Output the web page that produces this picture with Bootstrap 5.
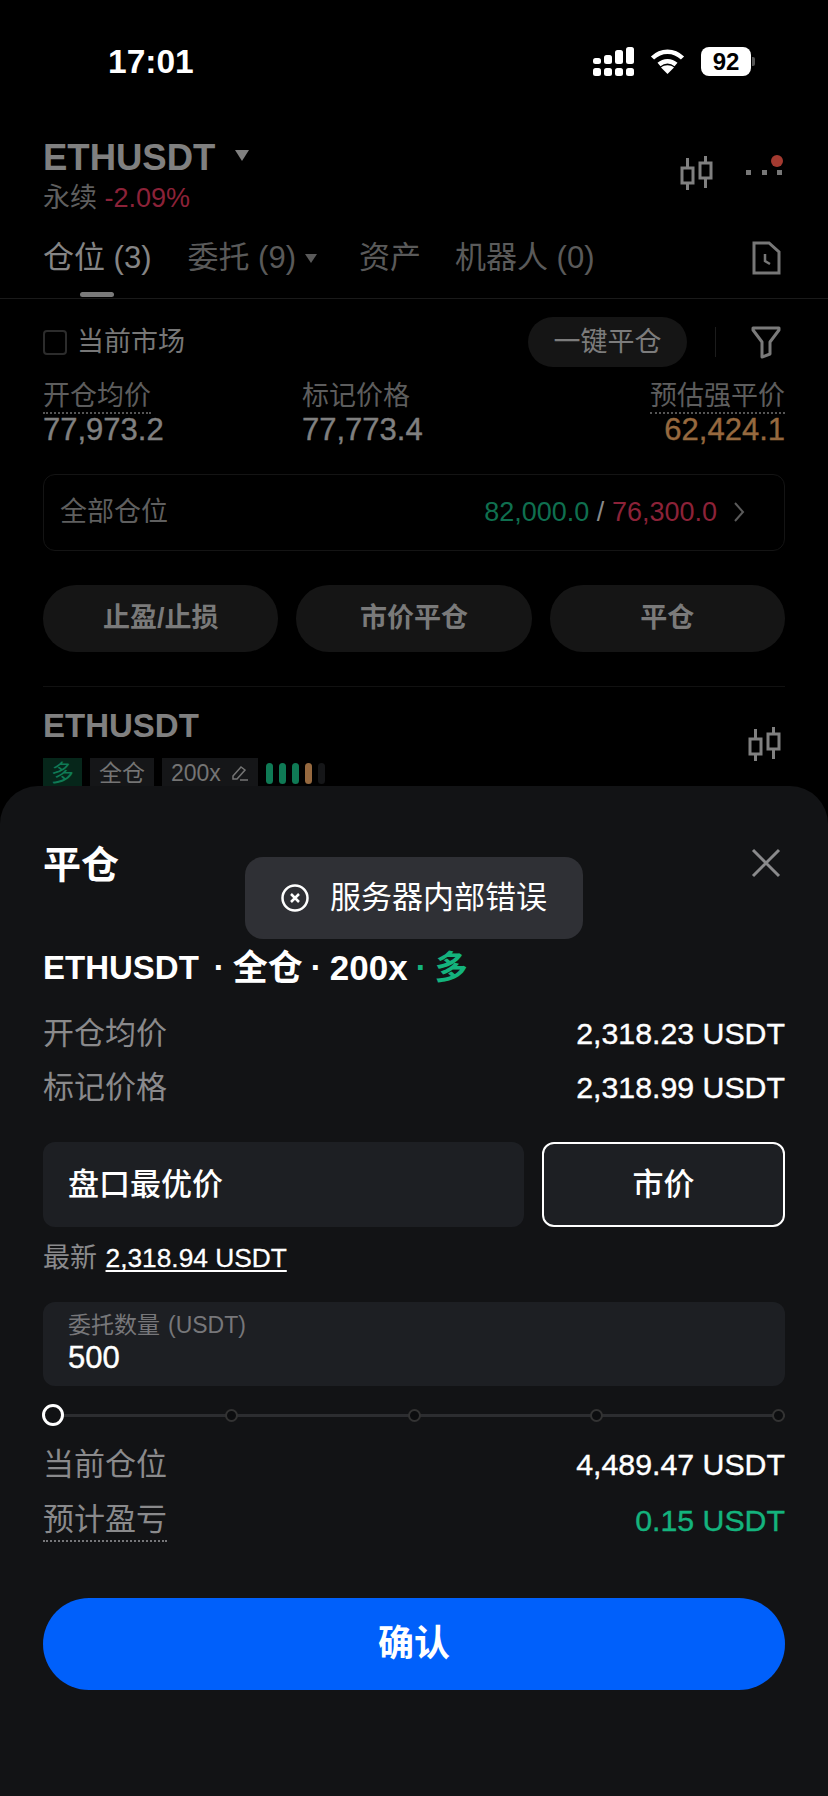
<!DOCTYPE html>
<html lang="zh-CN">
<head>
  <meta charset="UTF-8">
  <meta name="viewport" content="width=device-width, initial-scale=1.0">
  <title>平仓</title>
  <link rel="stylesheet" href="https://cdn.jsdelivr.net/npm/bootstrap@5.3.5/dist/css/bootstrap.min.css">
  <script src="https://cdn.jsdelivr.net/npm/bootstrap@5.3.5/dist/js/bootstrap.bundle.min.js"></script>
  <style>
    body { background: #000; font-family: "Liberation Sans", "Noto Sans CJK SC", sans-serif; }
    .screen { position: relative; width: 828px; height: 1796px; overflow: hidden; background: #000; color: #7d7d7d; }

    .status-bar { height: 88px; padding: 42px 73px 0 108px; color: #fff; }
    .status-time { font-size: 33.500px; line-height: 40px; font-weight: 700; }
    .status-icons { padding-top: 5px; }
    .batt { width: 50px; height: 29px; border-radius: 8px; background: #fff; color: #000; font-size: 24px; font-weight: 700; line-height: 29px; text-align: center; }
    .batt-nub { width: 3px; height: 9px; margin-left: 1px; border-radius: 0 2px 2px 0; background: #555; }

    .head-block { padding: 48px 43px 0; height: 150px; }
    .sym-big { font-size: 36.500px; line-height: 44px; font-weight: 700; color: #808080; }
    .sub-line { font-size: 27px; line-height: 34px; color: #5f5f5f; margin-top: 1px; }
    .down-dim { color: #8c2238; }
    .tri { width: 0; height: 0; border-left: 7px solid transparent; border-right: 7px solid transparent; border-top: 11px solid #808080; }
    .tri-big { margin-left: 20px; margin-top: -6px; }
    .tri-sm { border-left-width: 6px; border-right-width: 6px; border-top-width: 9px; border-top-color: #5a5a5a; margin-left: 9px; }
    .head-tools { padding-top: 19px; gap: 32px; }

    .tab-bar { height: 61px; padding: 0 43px; border-bottom: 1px solid #1a1a1a; position: relative; font-size: 31px; line-height: 36px; color: #5a5a5a; }
    .tab-on { color: #858585; }
    .tab-mark { position: absolute; left: 80px; bottom: 1px; width: 34px; height: 5px; border-radius: 3px; background: #7a7a7a; }
    .tab-item { padding-top: 2px; }
    .tab-gap-a { margin-left: 36px; }
    .tab-gap-b { margin-left: 42px; }
    .tab-gap-c { margin-left: 34px; }
    .tab-file { margin-top: 3px; }

    .pos-wrap { padding: 0 43px; }
    .filter-row { height: 50px; margin-top: 18px; font-size: 27px; color: #777; }
    .check-box { width: 24px; height: 25px; border: 2px solid #2c2c2c; border-radius: 4px; margin-right: 10px; }
    .pill-dim { width: 159px; height: 50px; border-radius: 25px; background: #151515; color: #7c7c7c; font-size: 27px; line-height: 50px; text-align: center; }
    .vsep { width: 1px; height: 30px; background: #1c1c1c; margin: 0 35px 0 28px; }

    .stat-row { font-size: 27px; margin-top: 9px; }
    .stat-first { width: 259px; }
    .stat-lbl { color: #5d5d5d; line-height: 32px; display: inline-block; }
    .dot-under { border-bottom: 2px dotted #555; }
    .stat-val { font-size: 31px; line-height: 32px; margin-top: -3px; color: #808080; -webkit-text-stroke: .4px; }
    .warm-dim { color: #96693f; }

    .all-box { height: 77px; margin-top: 28px; border: 1px solid #141414; border-radius: 12px; padding: 0 39px 0 16px; font-size: 27px; color: #5f5f5f; }
    .up-dim { color: #0f6f4f; }
    .slash-dim { color: #8a8a8a; }
    .all-chev { margin-left: 16px; }
    .act-row { margin-top: 34px; gap: 18px; }
    .act-btn { height: 67px; border-radius: 33px; background: #151515; color: #7a7a7a; font-size: 27px; font-weight: 700; line-height: 67px; text-align: center; flex: 1 1 0; }
    .row-rule { height: 1px; background: #111; margin-top: 34px; }
    .sym-mid { font-size: 33px; line-height: 38px; font-weight: 700; color: #808080; margin-top: 20px; }
    .tag-row { margin-top: 13px; }
    .tag-dim { height: 31px; line-height: 31px; background: #151618; color: #747474; font-size: 23px; padding: 0 9px; }
    .tag-long { background: #06261a; color: #0f7a55; padding: 0 8px; }
    .tag-lev { gap: 10px; }
    .pip-set { gap: 6px; padding-top: 5px; }
    .pip { width: 7px; height: 21px; border-radius: 4px; background: #0f7a55; }
    .pip-warm { background: #96693f; }
    .pip-off { background: #151618; }
    .sym-chart { margin-top: 39px; }

    .sheet { position: absolute; left: 0; right: 0; bottom: 0; height: 1010px; background: #121315; border-radius: 38px 38px 0 0; padding: 0 43px; color: #fff; }
    .sheet-top { height: 162px; padding-top: 57px; }
    .sheet-title { font-size: 38px; line-height: 44px; font-weight: 700; }
    .sheet-close { margin-top: 5px; }
    .meta-line { font-size: 33px; line-height: 40px; font-weight: 700; height: 40px; gap: 8px; }
    .meta-first { margin-left: 7px; }
    .meta-cjk { font-size: 35px; }
    .meta-lev { font-size: 35px; }
    .long-green { color: #14b37d; }
    .info-block { margin-top: 19px; }
    .info-row { height: 54px; font-size: 30.300px; -webkit-text-stroke: .4px; }
    .info-row-b { height: 56px; }
    .info-lbl { font-size: 31px; color: #8a8a8c; -webkit-text-stroke: 0; }
    .info-dots { border-bottom: 2px dotted #77777a; line-height: 40px; display: inline-block; }

    .pick-row { margin-top: 27px; }
    .pick-box { height: 85px; border-radius: 12px; background: #1d1f23; font-size: 31px; font-weight: 500; line-height: 85px; }
    .pick-main { width: 481px; padding-left: 25px; }
    .pick-side { width: 243px; border: 2px solid #fff; line-height: 81px; text-align: center; }
    .latest-line { font-size: 27px; line-height: 32px; margin-top: 15px; color: #8a8a8c; }
    .latest-line u { color: #fff; font-size: 26.300px; text-underline-offset: 3px; margin-left: 1px; -webkit-text-stroke: .3px; }

    .qty-box { height: 84px; margin-top: 28px; background: #1d1f23; border-radius: 12px; padding: 9px 25px 0; }
    .qty-lbl { font-size: 23px; line-height: 28px; color: #77777a; }
    .qty-unit { margin-left: 8px; }
    .qty-val { font-size: 31px; line-height: 38px; font-weight: 500; -webkit-text-stroke: .4px; }

    .slide-wrap { position: relative; height: 22px; margin-top: 18px; }
    .slide-line { position: absolute; left: 0; right: 0; top: 10px; height: 3px; background: #2c2d30; }
    .slide-stops { position: relative; height: 22px; }
    .slide-stop { width: 13px; height: 13px; border-radius: 50%; background: #0c0d0f; border: 2px solid #333; }
    .slide-thumb { position: absolute; left: -1px; top: 0; width: 22px; height: 22px; border-radius: 50%; background: #111214; border: 3px solid #fff; }
    .after-slide { margin-top: 11px; }

    .confirm-btn { display: block; width: 100%; height: 92px; margin-top: 49px; border: 0; border-radius: 46px; background: #0060fb; color: #fff; font-size: 36px; font-weight: 700; }

    .toast-msg { position: absolute; left: 245px; top: 857px; width: 338px; height: 82px; background: #2f3035; border-radius: 18px; color: #fff; font-size: 31px; padding-left: 36px; gap: 21px; }
  </style>
</head>
<body>
  <div class="screen">

    <div class="status-bar d-flex justify-content-between">
      <div class="status-time">17:01</div>
      <div class="status-icons d-flex align-items-start gap-3">
        <svg width="41" height="29" viewBox="0 0 41 29" fill="#fff">
          <rect x="0" y="11" width="8" height="6" rx="2.500"/><rect x="11" y="8" width="8" height="9" rx="2.500"/><rect x="22" y="3" width="8" height="14" rx="2.500"/><rect x="33" y="0" width="8" height="17" rx="2.500"/>
          <rect x="0" y="21" width="8" height="8" rx="2.500"/><rect x="11" y="21" width="8" height="8" rx="2.500"/><rect x="22" y="21" width="8" height="8" rx="2.500"/><rect x="33" y="21" width="8" height="8" rx="2.500"/>
        </svg>
        <svg width="35" height="28" viewBox="0 0 35 28" fill="none" stroke="#fff" stroke-width="4.500">
          <path d="M2.500 11C11 2.500 24 2.500 32.500 11"/><path d="M9 17.500C14 13 21 13 26 17.500"/><path d="M17.500 27l-6.500-6.500c3.500-3 9.500-3 13 0z" fill="#fff" stroke="none"/>
        </svg>
        <div class="d-flex align-items-center">
          <div class="batt">92</div>
          <div class="batt-nub"></div>
        </div>
      </div>
    </div>

    <div class="head-block d-flex justify-content-between">
      <div>
        <div class="d-flex align-items-center">
          <span class="sym-big">ETHUSDT</span><span class="tri tri-big"></span>
        </div>
        <div class="sub-line">永续 <span class="down-dim">-2.09%</span></div>
      </div>
      <div class="head-tools d-flex align-items-start">
        <svg width="33" height="36" viewBox="0 0 33 36" fill="none" stroke="#808080" stroke-width="3">
          <rect x="2" y="13" width="11" height="15"/><path d="M7.500 3v10M7.500 28v7"/><rect x="20" y="8" width="11" height="15"/><path d="M25.500 1v7M25.500 23v10"/>
        </svg>
        <svg width="40" height="24" viewBox="0 0 40 24" fill="#777">
          <rect x="1" y="15" width="5" height="5"/><rect x="17" y="15" width="5" height="5"/><rect x="32" y="15" width="5" height="5"/>
          <circle cx="32" cy="6" r="6" fill="#a33a30"/>
        </svg>
      </div>
    </div>

    <div class="tab-bar d-flex align-items-start">
      <div class="tab-item tab-on">仓位 (3)</div>
      <div class="tab-item tab-gap-a d-flex align-items-center">委托 (9)<span class="tri tri-sm"></span></div>
      <div class="tab-item tab-gap-b">资产</div>
      <div class="tab-item tab-gap-c">机器人 (0)</div>
      <svg class="tab-file ms-auto me-1" width="29" height="34" viewBox="0 0 29 34" fill="none" stroke="#777" stroke-width="3">
        <path d="M2 2h15l10 9v21H2z"/><path d="M13 13v7l5 3" stroke-width="2.500"/>
      </svg>
      <div class="tab-mark"></div>
    </div>

    <div class="pos-wrap">
      <div class="filter-row d-flex align-items-center">
        <div class="check-box"></div>
        <div>当前市场</div>
        <div class="pill-dim ms-auto">一键平仓</div>
        <div class="vsep"></div>
        <svg class="me-1" width="30" height="33" viewBox="0 0 30 33" fill="none" stroke="#7a7a7a" stroke-width="3" stroke-linejoin="round">
          <path d="M2 2h26v2L19 16v12l-8 3V16L2 4z"/>
        </svg>
      </div>

      <div class="stat-row d-flex">
        <div class="stat-first">
          <div class="stat-lbl dot-under">开仓均价</div>
          <div class="stat-val">77,973.2</div>
        </div>
        <div>
          <div class="stat-lbl">标记价格</div>
          <div class="stat-val">77,773.4</div>
        </div>
        <div class="ms-auto text-end">
          <div class="stat-lbl dot-under">预估强平价</div>
          <div class="stat-val warm-dim">62,424.1</div>
        </div>
      </div>

      <div class="all-box d-flex align-items-center">
        <div>全部仓位</div>
        <div class="ms-auto"><span class="up-dim">82,000.0</span> <span class="slash-dim">/</span> <span class="down-dim">76,300.0</span></div>
        <svg class="all-chev" width="12" height="24" viewBox="0 0 12 24" fill="none" stroke="#5a5a5a" stroke-width="2"><path d="M2 3l8 9-8 9"/></svg>
      </div>

      <div class="act-row d-flex">
        <div class="act-btn">止盈/止损</div>
        <div class="act-btn">市价平仓</div>
        <div class="act-btn">平仓</div>
      </div>

      <div class="row-rule"></div>

      <div class="d-flex justify-content-between">
        <div>
          <div class="sym-mid">ETHUSDT</div>
          <div class="tag-row d-flex align-items-start">
            <div class="tag-dim tag-long">多</div>
            <div class="tag-dim ms-2">全仓</div>
            <div class="tag-dim tag-lev ms-2 d-flex align-items-center">200x
              <svg width="18" height="16" viewBox="0 0 18 16" fill="none" stroke="#747474" stroke-width="1.500"><path d="M2 11L10 2l4 3-8 9H2zM9 15h8"/></svg>
            </div>
            <div class="pip-set d-flex ms-2">
              <div class="pip"></div>
              <div class="pip"></div>
              <div class="pip"></div>
              <div class="pip pip-warm"></div>
              <div class="pip pip-off"></div>
            </div>
          </div>
        </div>
        <svg class="sym-chart me-1" width="33" height="36" viewBox="0 0 33 36" fill="none" stroke="#808080" stroke-width="3">
          <rect x="2" y="13" width="11" height="15"/><path d="M7.500 3v10M7.500 28v7"/><rect x="20" y="8" width="11" height="15"/><path d="M25.500 1v7M25.500 23v10"/>
        </svg>
      </div>
    </div>

    <div class="sheet">
      <div class="sheet-top d-flex justify-content-between">
        <div class="sheet-title">平仓</div>
        <svg class="sheet-close me-1" width="30" height="30" viewBox="0 0 30 30" fill="none" stroke="#8a8a8c" stroke-width="3"><path d="M2 2l26 26M28 2L2 28"/></svg>
      </div>

      <div class="meta-line d-flex align-items-center">
        <span>ETHUSDT</span>
        <span class="meta-first">·</span>
        <span class="meta-cjk">全仓</span>
        <span>·</span>
        <span class="meta-lev">200x</span>
        <span class="long-green">·</span>
        <span class="long-green">多</span>
      </div>

      <div class="info-block">
        <div class="info-row d-flex justify-content-between align-items-center">
          <span class="info-lbl">开仓均价</span><span>2,318.23 USDT</span>
        </div>
        <div class="info-row d-flex justify-content-between align-items-center">
          <span class="info-lbl">标记价格</span><span>2,318.99 USDT</span>
        </div>
      </div>

      <div class="pick-row d-flex justify-content-between">
        <div class="pick-box pick-main">盘口最优价</div>
        <div class="pick-box pick-side">市价</div>
      </div>

      <div class="latest-line">最新 <u>2,318.94 USDT</u></div>

      <div class="qty-box">
        <div class="qty-lbl">委托数量<span class="qty-unit">(USDT)</span></div>
        <div class="qty-val">500</div>
      </div>

      <div class="slide-wrap">
        <div class="slide-line"></div>
        <div class="slide-stops d-flex justify-content-between align-items-center">
          <div class="slide-stop"></div>
          <div class="slide-stop"></div>
          <div class="slide-stop"></div>
          <div class="slide-stop"></div>
          <div class="slide-stop"></div>
        </div>
        <div class="slide-thumb"></div>
      </div>

      <div class="after-slide">
        <div class="info-row info-row-b d-flex justify-content-between align-items-center">
          <span class="info-lbl">当前仓位</span><span>4,489.47 USDT</span>
        </div>
        <div class="info-row info-row-b d-flex justify-content-between align-items-center">
          <span class="info-lbl info-dots">预计盈亏</span><span class="long-green">0.15 USDT</span>
        </div>
      </div>

      <button class="confirm-btn" type="button">确认</button>
    </div>

    <div class="toast-msg d-flex align-items-center">
      <svg width="28" height="28" viewBox="0 0 28 28" fill="none" stroke="#fff" stroke-width="2.500"><circle cx="14" cy="14" r="12.500"/><path d="M10 10l8 8M18 10l-8 8"/></svg>
      <span>服务器内部错误</span>
    </div>

  </div>
</body>
</html>
